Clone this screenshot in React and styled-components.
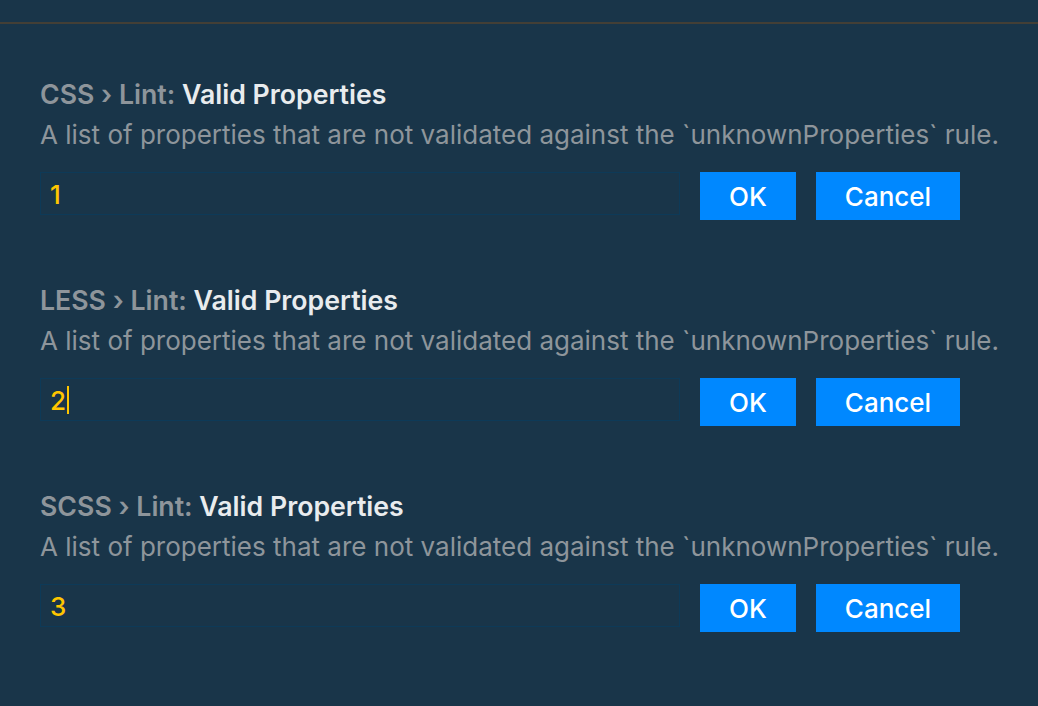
import React from "react";
import styled, { createGlobalStyle } from "styled-components";

const Global = createGlobalStyle`
  html, body {
    margin: 0;
    background: #193549;
  }
  body {
    font-family: Inter, "Noto Sans", sans-serif;
    -webkit-font-smoothing: antialiased;
  }
`

const Page = styled.div`
  width: 1038px;
  height: 706px;
  overflow: hidden;
  background: #193549;
`

const TopBar = styled.div`
  height: 22px;
  border-bottom: 2px solid #433f36;
`

const List = styled.div`
  display: flex;
  flex-direction: column;
  gap: 62px;
  padding: 52px 40px 0 40px;
`

const Setting = styled.div`
  display: flex;
  flex-direction: column;
`

const Title = styled.div`
  font-size: 26.7px;
  line-height: 36px;
  font-weight: 600;
  color: #8e959b;

  b {
    color: #e9ecee;
    font-weight: 600;
  }
`

const Description = styled.div`
  margin-top: 5px;
  font-size: 26px;
  line-height: 36px;
  color: #8e959b;
  white-space: nowrap;
`

const Row = styled.div`
  display: flex;
  align-items: flex-start;
  margin-top: 19px;
`

const Input = styled.div`
  box-sizing: border-box;
  width: 640px;
  height: 43px;
  border: 1px solid #0d3a58;
  background: #193549;
  padding: 1px 9px 0;
  display: flex;
  align-items: center;
  font-size: 26px;
  font-weight: 500;
  color: #ffc600;
`

const Caret = styled.span`
  display: inline-block;
  width: 2px;
  height: 28px;
  margin-left: 1px;
  background: #ffc600;
`

const Button = styled.button`
  box-sizing: border-box;
  width: ${p => p.$w}px;
  height: 48px;
  margin-left: 20px;
  border: 0;
  background: #0088ff;
  color: #ffffff;
  font-family: inherit;
  font-size: 26px;
  font-weight: 500;
  padding: 0;
  cursor: pointer;
`

const settings = [
  { lang: "CSS", value: "1" },
  { lang: "LESS", value: "2", focused: true },
  { lang: "SCSS", value: "3" },
]

const App = () => {
  return (
    <Page>
      <Global />
      <TopBar />
      <List>
        {settings.map(s => (
          <Setting key={s.lang}>
            <Title>
              {s.lang} › Lint: <b>Valid Properties</b>
            </Title>
            <Description>
              A list of properties that are not validated against the `unknownProperties` rule.
            </Description>
            <Row>
              <Input>
                {s.value}
                {s.focused && <Caret />}
              </Input>
              <Button $w={96}>OK</Button>
              <Button $w={144}>Cancel</Button>
            </Row>
          </Setting>
        ))}
      </List>
    </Page>
  )
}

export default App
